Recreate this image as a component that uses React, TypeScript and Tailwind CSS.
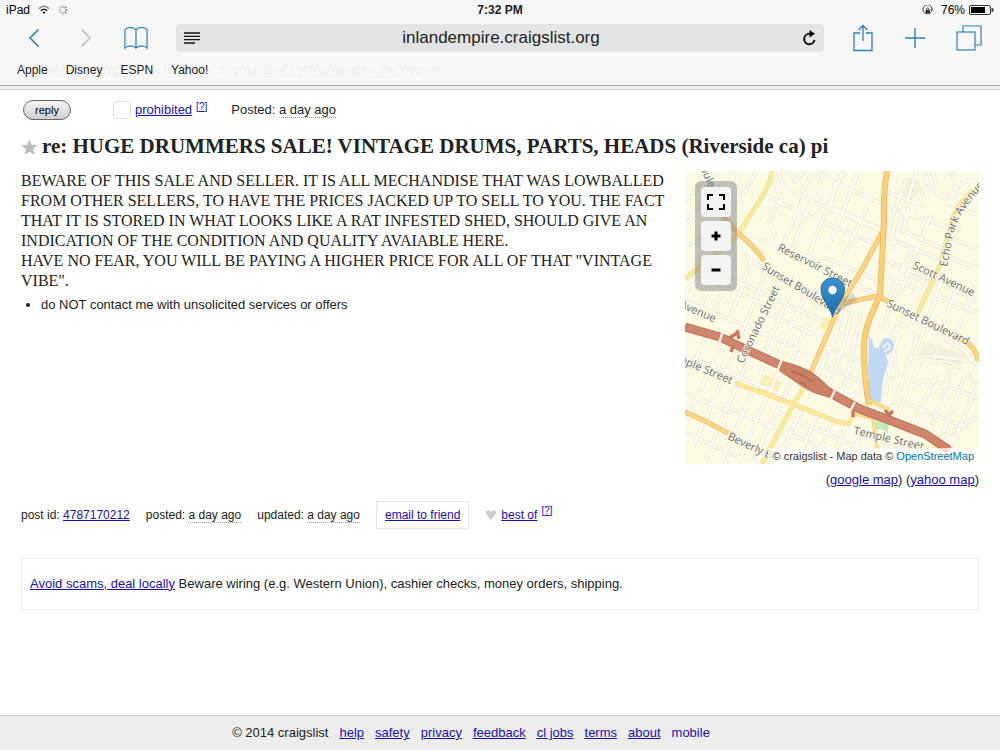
import React from "react";

const favorites = ["Apple", "Disney", "ESPN", "Yahoo!"];

const footerLinks = ["help", "safety", "privacy", "feedback", "cl jobs", "terms", "about"];

// small residential streets, drawn twice: casing first and then the fill
const minorStreets = [
    // north west
    "M0 30 L22 10 L30 0", "M12 0 L40 40 L60 20 L72 0", "M0 55 L18 30", "M0 75 L30 62",
    "M48 0 L56 14 L50 30", "M92 0 L100 18 L116 22 L128 0", "M104 0 L110 10 L120 0",
    "M80 24 L104 36 L140 52 L198 76", "M58 62 L96 76 L130 88", "M88 8 L96 28 L84 50 L90 64",
    "M120 22 L104 60 L96 76", "M140 0 L118 50 L106 80", "M158 0 L132 62 L124 84", "M128 0 L152 12 L200 34",
    "M150 12 L146 36 L196 58", "M172 4 L150 60 L142 78", "M186 28 L166 70 L158 90", "M118 26 L160 44 L196 60",
    // below Sunset Boulevard
    "M0 130 L40 146 L92 168 L120 182", "M0 96 L30 112 L62 126 L80 134", "M16 84 L10 106 L0 124",
    "M36 86 L26 112 L14 140", "M52 72 L44 100 L28 146", "M66 88 L56 120 L42 152", "M82 96 L70 130 L56 164",
    "M96 104 L84 136 L66 176", "M108 114 L94 148 L78 184", "M122 122 L106 156 L90 192", "M134 130 L116 168 L104 196",
    "M58 86 L100 108 L146 130", "M46 108 L90 128 L138 150", "M76 140 L104 152 L130 164",
    // between the freeway and Temple Street
    "M20 166 L4 206", "M36 172 L10 232 L2 250", "M50 180 L22 244 L8 276", "M64 188 L36 250 L20 290",
    "M78 196 L50 260 L36 292", "M92 204 L66 262 L54 292", "M106 212 L84 256 L68 290", "M0 184 L40 200 L92 222",
    "M0 262 L36 278 L64 290", "M42 236 L84 254 L130 274 L160 286", "M0 222 L48 242", "M118 236 L96 280",
    "M132 244 L112 290", "M146 252 L130 292", "M160 258 L146 292", "M90 240 L140 262 L176 278", "M176 262 L164 290",
    // center
    "M158 136 L150 168 L130 210", "M168 134 L160 170 L144 216", "M176 140 L166 190 L156 224", "M146 160 L178 174",
    "M140 176 L180 192", "M132 192 L180 212", "M150 216 L166 226 L180 214", "M138 86 L178 102 L198 112",
    "M162 110 L194 124",
    // north east
    "M206 0 L200 20 L240 36", "M200 66 L240 82 L262 92", "M222 6 L206 50 L202 66", "M232 0 L212 60 L208 80",
    "M200 34 L220 42 L250 52 L264 56", "M248 0 L252 20 L268 34 L292 44", "M240 10 L256 26 L278 12 L293 8",
    "M224 36 L218 60 L258 78", "M246 44 L232 78 L216 120 L210 132", "M228 74 L212 110 L204 128",
    "M198 88 L244 108 L293 130", "M218 100 L240 112 L234 130", "M264 66 L293 78", "M262 84 L280 94 L293 92",
    "M258 100 L250 130 L242 148", "M274 108 L262 144 L256 158", "M290 114 L272 162", "M244 0 L236 28 L230 40",
    "M266 0 L272 18 L268 34", "M276 52 L262 74", "M199 104 L236 120", "M238 118 L293 142",
    // south east
    "M204 136 L198 160 L214 164 L206 190 L200 230", "M212 150 L232 166 L222 196 L208 236",
    "M232 150 L256 166 L280 180 L293 196", "M222 190 Q236 182 256 186 L290 190", "M236 190 L214 240",
    "M244 194 Q260 184 280 200 L293 214", "M252 202 L232 248", "M266 196 L262 212 L246 256", "M280 204 L258 262",
    "M291 216 L270 268", "M226 216 Q240 206 256 212 L293 228", "M220 232 L250 244 L286 258", "M216 142 L208 168",
    "M238 160 L230 182", "M256 170 L248 190", "M210 182 L212 204 L204 212", "M196 272 L240 290",
    "M206 262 L198 290", "M226 266 L214 292", "M246 276 L240 292", "M250 270 L293 246",
].join(" ");

const yellowRoads =
    "M87 0 Q85 13 77 26 L55 60 Q46 73 32 82 L0 108 M293 16 Q270 32 265 57 L255 94 L232 144 M50 212 L108 233 L150 250 L163 253 L170 242 M125 205 L108 234 L77 293";

const orangeRoads =
    "M38 46 L55 64 Q70 76 79 90 M197 61 L178 97 L155 134 L125 203 M153 134 Q172 129 192 125 L204 131 M0 241 L22 251 L43 262 M273 168 Q290 172 293 190";

const mainRoad = "M202 0 Q198 22 199 52 L195 124 L185 147 Q178 164 179 184 Q180 214 184 234";

const ramps = "M170 243 L188 247 L192 277 M184 229 L203 238 L205 246 L185 240";

const freeway = "M0 156 L35 166 L60 178 L95 194 L120 206 L147 223 L175 238 L212 252 L240 263 L264 279";

const MapDrawing = () => (
    <svg viewBox="0 0 294 293" className="block w-full" role="img" aria-label="Map of the listing location">
        <defs>
            <path id="sunset-west" d="M76 97 Q98 112 116 121 L160 149" />
            <path id="sunset-east" d="M201 135 L234 151 L290 178" />
            <path id="echo-park" d="M262 96 L269 60 Q275 40 300 14" />
            <linearGradient id="pin" x1="0" y1="0" x2="0" y2="1">
                <stop offset="0" stopColor="#3b93d0" />
                <stop offset="1" stopColor="#1c6ca8" />
            </linearGradient>
        </defs>
        <rect width="294" height="293" fill="#fdfae4" />
        <g fill="#f3f0db">
            <path d="M220 10 L229 4 L237 17 L226 30 L218 27 Z" />
            <path d="M238 170 L280 184 L274 198 L234 184 Z" />
        </g>
        <path d="M78 203 L97 211 L88 226 L73 220 Z M137 147 L147 146 L142 160 L134 157 Z" fill="#fbeeb0" />
        <path d="M247 273 L267 276 L263 285 L240 281 Z" fill="#fbefb4" />
        <path d="M188 251 L204 250 L203 261 L196 258 L190 259 Z" fill="#c3e8b4" />
        <g fill="none" strokeLinejoin="round">
            <path d={minorStreets} stroke="#e7e4d8" strokeWidth="3.800" />
            <path d={minorStreets} stroke="#fefcee" strokeWidth="2.400" />
        </g>
        <path
            d="M184 165 Q188 169 189 176 Q193 179 195 174 Q197 167 203 167 Q209 169 209 175 Q208 182 201 183 L203 192 L198 208 L196 231 L185 229 L183 195 Z"
            fill="#bfd9f4"
        />
        <path d="M198 177 Q201 171 204 173 L205 177 L200 180" fill="none" stroke="#fdfae4" strokeWidth="1.600" />
        <g fill="none" strokeLinejoin="round">
            <path d={yellowRoads} stroke="#eedb8c" strokeWidth="4.600" />
            <path d={yellowRoads} stroke="#fbea9b" strokeWidth="3.200" />
            <path d={orangeRoads} stroke="#e8c274" strokeWidth="5" />
            <path d={orangeRoads} stroke="#fbd584" strokeWidth="3.200" />
            <path d={mainRoad} stroke="#e6b968" strokeWidth="6" />
            <path d={mainRoad} stroke="#fbce78" strokeWidth="4.400" />
            <path d={ramps} stroke="#e8cf82" strokeWidth="3.600" />
            <path d={ramps} stroke="#fbe08e" strokeWidth="2.200" />
            <path d="M44 167 L54 161 M52 159 L54 168 M46 181 L50 170 M200 239 L206 247 M208 240 L200 248 M168 238 L168 246" stroke="#cb7860" strokeWidth="3.500" />
            <path d={freeway} stroke="#c0725b" strokeWidth="9" />
            <path d={freeway} stroke="#cf846d" strokeWidth="7" />
        </g>
        <path d="M95 190 Q113 194 126 201 Q138 209 147 220 L144 226 Q126 222 114 213 L95 200 Z" fill="#c98263" stroke="#c46a55" />
        <path d="M106 200 L119 205 L128 211 M114 210 L122 215" fill="none" stroke="#bb4f44" />
        <path d="M38 160 L34 172 M97 188 L92 201 M150 219 L145 230 M170 231 L164 242" fill="none" stroke="#f6f1e4" strokeWidth="2.400" />
        <g
            className="font-['Open_Sans','Noto_Sans',sans-serif] text-[11px]"
            fill="#6c6d76"
            stroke="#fdfae4"
            strokeWidth="1.500"
            paintOrder="stroke"
        >
            <text x="92" y="79" transform="rotate(27 92 79)">Reservoir Street</text>
            <text x="227" y="97" transform="rotate(25 227 97)">Scott Avenue</text>
            <text x="58" y="193" transform="rotate(-64 58 193)">Coronado Street</text>
            <text x="-6" y="136" transform="rotate(24 -6 136)">Avenue</text>
            <text x="-9" y="190" transform="rotate(23 -9 190)">mple Street</text>
            <text x="42" y="268" transform="rotate(25 42 268)">Beverly B</text>
            <text x="168" y="263" transform="rotate(13 168 263)">Temple Street</text>
            <text x="15" y="-3" transform="rotate(66 15 -3)">oule</text>
            <text><textPath href="#sunset-west">Sunset Boulevard</textPath></text>
            <text><textPath href="#sunset-east">Sunset Boulevard</textPath></text>
            <text><textPath href="#echo-park">Echo Park Avenue</textPath></text>
        </g>
        {/* marker */}
        <path d="M149 145 L172 129 L168 122 L157 128 Z" fill="#555" opacity="0.200" />
        <path
            d="M147.500 146 C146 137 136 129 136 118.500 C136 111.500 141 107 147.500 107 C154 107 159.500 111.500 159.500 118.500 C159.500 129 149 137 147.500 146 Z"
            fill="url(#pin)"
            stroke="#2371a8"
        />
        <circle cx="147.500" cy="119" r="4.200" fill="#fff" />
    </svg>
);

const MapButton = ({ label, children }: { label: string; children: React.ReactNode }) => (
    <button aria-label={label} className="flex h-[30px] w-[30px] items-center justify-center rounded bg-[#f4f4f4]">
        <svg viewBox="0 0 20 20" className="size-5" fill="none" stroke="#000">
            {children}
        </svg>
    </button>
);

const StatusBar = () => (
    <div className="grid h-5 grid-cols-3 items-center px-1.5 text-[12px] font-medium text-black">
        <div className="flex items-center gap-2">
            <span>iPad</span>
            <svg viewBox="0 0 12 10" className="h-[10px] w-3" fill="none" stroke="#222" strokeWidth="1.500">
                <path d="M0.800 3.600 Q6 -1 11.200 3.600" stroke="#888" />
                <path d="M2.700 5.700 Q6 3 9.300 5.700" />
                <path d="M4.300 7.200 Q6 6 7.700 7.200 L6 9 Z" fill="#222" stroke="none" />
            </svg>
            <svg viewBox="0 0 12 12" className="size-[10px]" fill="none" stroke="#999" strokeWidth="1.300">
                <path d="M6 0.500 V3.500 M2 2 L4 4 M0.500 6 H3.500 M2 10 L4 8 M6 8.500 V11.500" />
                <path d="M8 8 L10 10 M8.500 6 H11.500 M8 4 L10 2" stroke="#555" />
            </svg>
        </div>
        <div className="text-center font-bold text-[#222]">7:32 PM</div>
        <div className="flex items-center justify-end gap-1">
            <svg viewBox="0 0 12 12" className="mr-1 size-[11px]" fill="none" stroke="#333">
                <path d="M10.500 7 A5 5 0 1 1 11 4.500" />
                <path d="M9 4.500 H12 L10.700 7 Z" fill="#333" stroke="none" />
                <rect x="4" y="5.500" width="4.500" height="3.300" fill="#222" stroke="none" />
                <path d="M4.900 5.500 V4.500 A1.300 1.300 0 0 1 7.500 4.500 V5.500" />
            </svg>
            <span>76%</span>
            <svg viewBox="0 0 25 10" className="h-[10px] w-[25px]" fill="none" stroke="#333">
                <rect x="0.500" y="0.500" width="21" height="9" rx="1.500" />
                <rect x="2" y="2" width="14" height="6" fill="#000" stroke="none" />
                <path d="M23.500 3.300 V6.700" strokeWidth="2" />
            </svg>
        </div>
    </div>
);

const BrowserBar = () => (
    <nav className="flex h-9 items-center">
        <button aria-label="Back" className="ml-6 w-5">
            <svg viewBox="0 0 20 20" className="size-5" fill="none" stroke="#2f7cc0" strokeWidth="1.600">
                <path d="M14.500 1.500 L6 10 L14.500 18.500" />
            </svg>
        </button>
        <button aria-label="Forward" className="ml-8 w-5">
            <svg viewBox="0 0 20 20" className="size-5" fill="none" stroke="#bdbdbd" strokeWidth="1.600">
                <path d="M5.500 1.500 L14 10 L5.500 18.500" />
            </svg>
        </button>
        <button aria-label="Bookmarks" className="ml-7 w-6">
            <svg viewBox="0 0 26 26" className="h-6 w-6" fill="none" stroke="#2f7cb8" strokeWidth="1.300">
                <path d="M13 4 Q11 1.500 7 1.500 Q3 1.500 1 4 V24 Q3 21.500 7 21.500 Q11 21.500 13 24 Q15 21.500 19 21.500 Q23 21.500 25 24 V4 Q23 1.500 19 1.500 Q15 1.500 13 4 V24" />
            </svg>
        </button>
        <div className="ml-7 flex h-7 flex-1 items-center rounded bg-[#e3e4e5] px-2">
            <button aria-label="Reader">
                <svg viewBox="0 0 16 12" className="h-3 w-4" stroke="#111" strokeWidth="1.300">
                    <path d="M0 1 H16 M0 4.300 H16 M0 7.600 H16 M0 11 H11" />
                </svg>
            </button>
            <input
                aria-label="Address"
                defaultValue="inlandempire.craigslist.org"
                className="min-w-0 flex-1 bg-transparent text-center text-[17px] text-[#222] outline-none"
            />
            <button aria-label="Reload">
                <svg viewBox="0 0 14 16" className="h-4 w-[14px]" fill="none" stroke="#111" strokeWidth="2">
                    <path d="M9.500 3.800 H7.500 A5.200 5.200 0 1 0 12.500 10" />
                    <path d="M7.500 0 L13 3.800 L7.500 7.600 Z" fill="#111" stroke="none" />
                </svg>
            </button>
        </div>
        <button aria-label="Share" className="ml-7">
            <svg viewBox="0 0 22 28" className="h-7 w-[22px]" fill="none" stroke="#2f80bd" strokeWidth="1.300">
                <path d="M8 9 H2 V26.500 H20 V9 H14 M11 17 V1.500 M6.500 6 L11 1.500 L15.500 6" />
            </svg>
        </button>
        <button aria-label="New tab" className="ml-[30px]">
            <svg viewBox="0 0 22 22" className="h-[22px] w-[22px]" fill="none" stroke="#2f80bd" strokeWidth="1.400">
                <path d="M11 1 V21 M1 11 H21" />
            </svg>
        </button>
        <button aria-label="Tabs" className="mr-[18px] ml-[30px]">
            <svg viewBox="0 0 26 26" className="h-[26px] w-[26px]" fill="none" stroke="#2f80bd" strokeWidth="1.200">
                <rect x="1" y="7" width="18" height="18" />
                <path d="M7 7 V1 H25 V20 H19" />
            </svg>
        </button>
    </nav>
);

const Header = () => (
    <header className="border-b border-[#a9acad] bg-[#f7f7f7]">
        <StatusBar />
        <BrowserBar />
        <div className="relative flex h-[29px] items-center gap-[18px] px-[17px] pb-[2px] text-[12px] text-[#222]">
            {/* page breadcrumb showing through the translucent bar */}
            <div className="absolute top-1 left-[50px] flex gap-[7px] text-[15px] leading-5 text-[#f0f0f0]">
                <span className="underline">inland empire</span>
                <span>&gt;</span>
                <span className="underline">for sale</span>
                <span>&gt;</span>
                <span className="underline">musical instruments - by owner</span>
            </div>
            {favorites.map((name) => (
                <a key={name} href="#" className="relative">{name}</a>
            ))}
        </div>
    </header>
);

const link = "text-[#1a10b5] underline";
const dotted = "border-b border-dotted border-gray-400";

const App = () => {
    return (
        <div className="flex min-h-screen flex-col bg-white font-['Liberation_Sans',Arial,sans-serif] text-[#222]">
            <Header />
            <div className="h-1 border-b border-[#cfcfcf] bg-[#f1f1f1]" />
            <main className="flex-1 px-[21px]">
                <div className="flex h-10 items-center text-[13px]">
                    <button className="ml-[2px] h-5 w-12 rounded-full border border-[#666] bg-linear-to-b from-[#f6f6f6] to-[#cfcfcf] text-[11px] leading-4 text-black">
                        reply
                    </button>
                    <label className="ml-[42px] flex items-center gap-1">
                        <input type="checkbox" className="size-[18px] appearance-none rounded border border-[#ddd] bg-white" />
                        <a href="#" className={link}>prohibited</a>
                    </label>
                    <a href="#" className="mb-2 ml-1 text-[10px] text-[#1a10b5]">[<span className="underline">?</span>]</a>
                    <span className="ml-6">
                        Posted: <time className={dotted}>a day ago</time>
                    </span>
                </div>
                <h2 className="flex h-[34px] items-center gap-1 font-['Liberation_Serif','Times_New_Roman',serif] text-[21px] font-bold">
                    <svg viewBox="0 0 18 18" className="size-[17px]">
                        <path d="M9 0.500 L11.300 6.200 L17.500 6.600 L12.700 10.500 L14.400 16.800 L9 13.400 L3.600 16.800 L5.300 10.500 L0.500 6.600 L6.700 6.200 Z" fill="#bbb" />
                    </svg>
                    re: HUGE DRUMMERS SALE! VINTAGE DRUMS, PARTS, HEADS (Riverside ca) pi
                </h2>
                <div className="flex items-start justify-between gap-4 pt-[7px]">
                    <section className="min-w-0 flex-1">
                        <p className="font-['Liberation_Serif','Times_New_Roman',serif] text-[16px] leading-5">
                            BEWARE OF THIS SALE AND SELLER. IT IS ALL MECHANDISE THAT WAS LOWBALLED FROM OTHER SELLERS, TO HAVE
                            THE PRICES JACKED UP TO SELL TO YOU. THE FACT THAT IT IS STORED IN WHAT LOOKS LIKE A RAT INFESTED
                            SHED, SHOULD GIVE AN INDICATION OF THE CONDITION AND QUALITY AVAIABLE HERE.
                            <br />
                            HAVE NO FEAR, YOU WILL BE PAYING A HIGHER PRICE FOR ALL OF THAT "VINTAGE VIBE".
                        </p>
                        <ul className="mt-1 list-disc pl-5 text-[13px]">
                            <li>do NOT contact me with unsolicited services or offers</li>
                        </ul>
                    </section>
                    <aside className="w-[30%] max-w-[294px] min-w-[294px]">
                        <div className="relative overflow-hidden">
                            <MapDrawing />
                            <div className="absolute top-[10px] left-[10px] flex flex-col gap-1 rounded-md bg-[#777]/45 p-[6px]">
                                <MapButton label="Full screen">
                                    <path d="M2 8 V3 H7 M13 3 H18 V8 M18 12 V17 H13 M7 17 H2 V12" strokeWidth="2" />
                                </MapButton>
                                <MapButton label="Zoom in">
                                    <path d="M10 5.500 V14.500 M5.500 10 H14.500" strokeWidth="3" />
                                </MapButton>
                                <MapButton label="Zoom out">
                                    <path d="M5.500 10 H14.500" strokeWidth="3" />
                                </MapButton>
                            </div>
                            <div className="absolute right-0 bottom-0 bg-white/70 px-[5px] text-[11px] leading-4 text-[#333]">
                                © craigslist - Map data © <a href="#" className="text-[#0078a8]">OpenStreetMap</a>
                            </div>
                        </div>
                        <p className="mt-1.5 text-right text-[13px]">
                            (<a href="#" className={link}>google map</a>) (<a href="#" className={link}>yahoo map</a>)
                        </p>
                    </aside>
                </div>
                <div className="mt-3 flex h-[26px] items-center text-[12px]">
                    <span>post id: <a href="#" className={link}>4787170212</a></span>
                    <span className="ml-4">posted: <time className={dotted}>a day ago</time></span>
                    <span className="ml-4">updated: <time className={dotted}>a day ago</time></span>
                    <span className="ml-4 border border-[#e5e5e5] px-2 py-1">
                        <a href="#" className={link}>email to friend</a>
                    </span>
                    <svg viewBox="0 0 12 12" className="ml-4 size-3">
                        <path d="M6 11 C4 8 1 6 1 3.500 C1 0.500 5 0.500 6 3.500 C7 0.500 11 0.500 11 3.500 C11 6 8 8 6 11 Z" fill="#ccc" />
                    </svg>
                    <a href="#" className={"ml-1 " + link}>best of</a>
                    <a href="#" className="mb-2 ml-1 text-[10px] text-[#1a10b5]">[<span className="underline">?</span>]</a>
                </div>
                <p className="mt-[30px] mb-8 border border-[#eee] px-2 py-4 text-[13px] leading-[18px]">
                    <a href="#" className={link}>Avoid scams, deal locally</a> Beware wiring (e.g. Western Union), cashier checks, money
                    orders, shipping.
                </p>
            </main>
            <footer className="flex h-[35px] items-center justify-center gap-[11px] border-t border-[#ccc] bg-[#ededed] pr-[58px] text-[13px]">
                <span>© 2014 craigslist</span>
                {footerLinks.map((name) => (
                    <a key={name} href="#" className={link}>{name}</a>
                ))}
                <a href="#" className="text-[#1a10b5]">mobile</a>
            </footer>
        </div>
    );
};

export default App;
